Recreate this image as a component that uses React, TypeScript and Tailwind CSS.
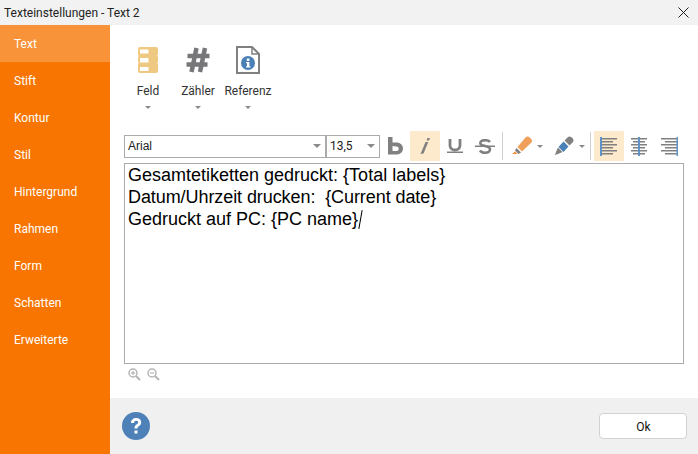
const uiFont = "font-['Roboto','Noto_Sans',sans-serif]";

const navItems = ["Text", "Stift", "Kontur", "Stil", "Hintergrund", "Rahmen", "Form", "Schatten", "Erweiterte"];

function Caret({ className = "" }: { className?: string }) {
  return (
    <svg width="6" height="3" viewBox="0 0 6 3" className={className}>
      <path d="M0 0h6L3 3z" fill="#8a8a8a" />
    </svg>
  );
}

function FieldIcon() {
  return (
    <svg width="20" height="26" viewBox="0 0 20 26">
      <path d="M2 0h16a2 2 0 0 1 2 2v5.500l-1 1 1 1v5.500l-1 1 1 1V24a2 2 0 0 1-2 2H2a2 2 0 0 1-2-2v-7.500l1-1-1-1V10l1-1-1-1V2a2 2 0 0 1 2-2z" fill="#efc981" />
      <rect x="2" y="2.500" width="8.500" height="4" fill="#fff" />
      <rect x="2" y="11" width="8.500" height="4.500" fill="#fff" />
      <rect x="2" y="20" width="8.500" height="4" fill="#fff" />
    </svg>
  );
}

function HashIcon() {
  return (
    <svg width="24" height="26" viewBox="0 0 24 26">
      <path d="M10.500 1 5.500 25M19 1l-5 24M1.500 9h22M.5 17.500h21" fill="none" stroke="#77777a" stroke-width="4.500" />
    </svg>
  );
}

function ReferenceIcon() {
  return (
    <svg width="24" height="28" viewBox="0 0 24 28">
      <path d="M1 1h15l7 7v19H1z" fill="#fff" stroke="#808080" stroke-width="2" />
      <path d="M16 1v7h7" fill="none" stroke="#808080" stroke-width="1.500" />
      <circle cx="12" cy="17" r="7" fill="#4a80b8" />
      <rect x="10.800" y="12.500" width="2.600" height="2.400" fill="#fff" />
      <path d="M10 16h3.400v4.300h1v1.200H10v-1.200h1v-3.100h-1z" fill="#fff" />
    </svg>
  );
}

function BoldIcon() {
  return (
    <svg width="16" height="18" viewBox="0 0 16 18">
      <path d="M1 0h4.500v5.500H10a6 6 0 0 1 0 12H1zm4.500 9V14H9.500a2 2 0 0 0 0-4.500z" fill="#808080" fill-rule="evenodd" />
    </svg>
  );
}

function ItalicIcon() {
  return (
    <svg width="10" height="16" viewBox="0 0 10 16">
      <path d="M7.500 0H10L9 2.500H6.500zM5.500 4h2.800L3.500 15.500.5 16z" fill="#808080" />
    </svg>
  );
}

function UnderlineIcon() {
  return (
    <svg width="16" height="14" viewBox="0 0 16 14">
      <path d="M3 0v6.500a5 4.500 0 0 0 10 0V0" fill="none" stroke="#808080" stroke-width="2.800" />
      <rect x="0" y="12.500" width="16" height="1.500" fill="#808080" />
    </svg>
  );
}

function StrikeIcon() {
  return (
    <svg width="20" height="15" viewBox="0 0 20 15">
      <path d="M15 3C14 1.700 12 1.200 10 1.200c-2.500 0-4.700.8-4.700 2.800S7.500 6.500 10 7s5 1 5 3.200-2.200 3.500-5 3.500c-2 0-4-.6-5-2.200" fill="none" stroke="#808080" stroke-width="2.600" />
      <rect x="0" y="6.500" width="20" height="1.500" fill="#808080" />
    </svg>
  );
}

function HighlighterIcon() {
  return (
    <svg width="21" height="20" viewBox="0 0 21 20">
      <path d="M13.500 1.500a3 3 0 0 1 4.200 0l1.300 1.300a3 3 0 0 1 0 4.200L10 15.500 5.500 11z" fill="#f0a05a" />
      <path d="M4.500 12 9 16.500 6.500 18 3 14.500z" fill="#808080" />
      <path d="M3 15.500 5.500 18H0z" fill="#ef8f3a" />
    </svg>
  );
}

function PenIcon() {
  return (
    <svg width="20" height="20" viewBox="0 0 20 20">
      <path d="M13.500 1.500a3 3 0 0 1 4.200 0l.8.800a3 3 0 0 1 0 4.200l-3 3-5-5z" fill="#808080" />
      <path d="M9.500 5.500l5 5-5 5.500-5-5z" fill="#4a80b8" />
      <path d="M4 11.500 8.500 16 4 18l-3 1 1-3z" fill="#808080" />
    </svg>
  );
}

function AlignIcon({ kind }: { kind: "left" | "center" | "right" }) {
  const lines = [
    [2, 16],
    [5, 12],
    [8, 16],
    [11, 12],
    [14, 16],
    [17, 12],
  ];
  return (
    <svg width="18" height="19" viewBox="0 0 18 19">
      {lines.map(([y, w], i) => (
        <rect
          key={i}
          x={kind === "left" ? 1 : kind === "right" ? 17 - w : 9 - w / 2}
          y={y - 1}
          width={w}
          height="1.500"
          fill="#808080"
        />
      ))}
      <rect x={kind === "left" ? 0 : kind === "right" ? 16.500 : 8} y="0" width="2" height="19" fill="#5f93c8" />
    </svg>
  );
}

function ToolButton({ active, children }: { active?: boolean; children: React.ReactNode }) {
  return (
    <div className={`w-[30px] h-[30px] flex items-center justify-center ${active ? "bg-[#fde9cc]" : ""}`}>
      {children}
    </div>
  );
}

function FieldButton({ label, children }: { label: string; children: React.ReactNode }) {
  return (
    <div className="w-[50px] flex flex-col items-center">
      <div className="h-[30px] flex items-center justify-center">{children}</div>
      <div className="mt-[8px] text-[12px] leading-[16px] text-[#333]">{label}</div>
      <Caret className="mt-[7px]" />
    </div>
  );
}

function Select({ value, className }: { value: string; className: string }) {
  return (
    <div className={`h-[23px] border border-[#ababab] bg-white flex items-center justify-between pl-[3px] pr-[4px] text-[12px] text-[#222] ${className}`}>
      <span>{value}</span>
      <svg width="8" height="4" viewBox="0 0 8 4">
        <path d="M0 0h8L4 4z" fill="#8a8a8a" />
      </svg>
    </div>
  );
}

function ZoomIcon({ plus }: { plus?: boolean }) {
  return (
    <svg width="13" height="13" viewBox="0 0 13 13">
      <circle cx="5" cy="5" r="4" fill="#fff" stroke="#b5b5b5" stroke-width="1.500" />
      <path d="M3 5h4" stroke="#a8a8a8" />
      {plus && <path d="M5 3v4" stroke="#a8a8a8" />}
      <path d="M8 8l4 4" stroke="#b5b5b5" stroke-width="2" />
    </svg>
  );
}

export default function App() {
  return (
    <div className={`w-[698px] h-[454px] flex flex-col bg-white overflow-hidden ${uiFont}`}>
      <div className="h-[25px] bg-[#f2f2f2] flex items-center justify-between pl-[4px] pr-[9px] text-[12px] text-[#222]">
        <span>Texteinstellungen - Text 2</span>
        <svg width="11" height="11" viewBox="0 0 11 11">
          <path d="M.5.500l10 10M10.500.500l-10 10" stroke="#222" stroke-width="1" />
        </svg>
      </div>

      <div className="flex-1 flex min-h-0">
        <nav className="w-[110px] bg-[#f77500] flex flex-col">
          {navItems.map((item, i) => (
            <div
              key={item}
              className={`h-[37px] flex items-center pl-[14px] text-[12px] text-white ${i === 0 ? "bg-[#f99339]" : ""}`}
            >
              {item}
            </div>
          ))}
        </nav>

        <div className="flex-1 flex flex-col min-w-0">
          <main className="flex-1 pl-[14px] pr-[14px] min-h-0">
            <div className="flex pt-[20px] -ml-[1px] h-[106px]">
              <FieldButton label="Feld"><FieldIcon /></FieldButton>
              <FieldButton label="Zähler"><HashIcon /></FieldButton>
              <FieldButton label="Referenz"><ReferenceIcon /></FieldButton>
            </div>

            <div className="flex items-center h-[30px] mb-[2px]">
              <Select value="Arial" className="w-[202px] font-['Liberation_Sans',sans-serif]" />
              <Select value="13,5" className="w-[54px]" />
              <div className="flex items-center">
                <ToolButton><BoldIcon /></ToolButton>
                <ToolButton active><ItalicIcon /></ToolButton>
                <ToolButton><UnderlineIcon /></ToolButton>
                <ToolButton><StrikeIcon /></ToolButton>
              </div>
              <div className="w-[1px] h-[28px] bg-[#cfcfcf] ml-[2px]" />
              <div className="w-[24px] ml-[7px] flex justify-center"><HighlighterIcon /></div>
              <Caret className="ml-[3px]" />
              <div className="w-[24px] ml-[9px] flex justify-center"><PenIcon /></div>
              <Caret className="ml-[3px]" />
              <div className="w-[1px] h-[28px] bg-[#cfcfcf] ml-[5px]" />
              <div className="ml-[3px] flex items-center">
                <ToolButton active><AlignIcon kind="left" /></ToolButton>
                <ToolButton><AlignIcon kind="center" /></ToolButton>
                <ToolButton><AlignIcon kind="right" /></ToolButton>
              </div>
            </div>

            <div className="h-[201px] border border-[#ababab] bg-white pl-[3px] font-['Liberation_Sans',sans-serif] text-[18px] leading-[22px] text-black">
              <div>Gesamtetiketten gedruckt: {"{Total labels}"}</div>
              <div className="whitespace-pre tracking-[-0.08px]">Datum/Uhrzeit drucken:  {"{Current date}"}</div>
              <div className="flex items-center">
                Gedruckt auf PC: {"{PC name}"}
                <span className="inline-block w-[1px] h-[19px] bg-black ml-[2px] rotate-[10deg]" />
              </div>
            </div>

            <div className="flex gap-[6px] pl-[4px] pt-[4px]">
              <ZoomIcon plus />
              <ZoomIcon />
            </div>
          </main>

          <footer className="h-[56px] bg-[#f0f0f0] flex items-center justify-between pl-[12px] pr-[11px]">
            <svg width="28" height="28" viewBox="0 0 28 28">
              <circle cx="14" cy="14" r="14" fill="#4f81b9" />
              <path d="M9 11c0-3 2.200-5 5.200-5s5 1.800 5 4.300c0 2-1 3-2.500 4-1 .7-1.200 1.100-1.200 2.200h-3c0-2 .5-3 2-4 1-.7 1.700-1.200 1.700-2.100 0-1-.8-1.600-2-1.600-1.300 0-2 .8-2.100 2.200z" fill="#fff" />
              <rect x="12.500" y="18.500" width="3" height="3" fill="#fff" />
            </svg>
            <button className="w-[88px] h-[26px] pl-[1px] pt-[1px] bg-white border border-[#d2d2d2] rounded-[4px] text-[12px] text-[#111]">Ok</button>
          </footer>
        </div>
      </div>
    </div>
  );
}
